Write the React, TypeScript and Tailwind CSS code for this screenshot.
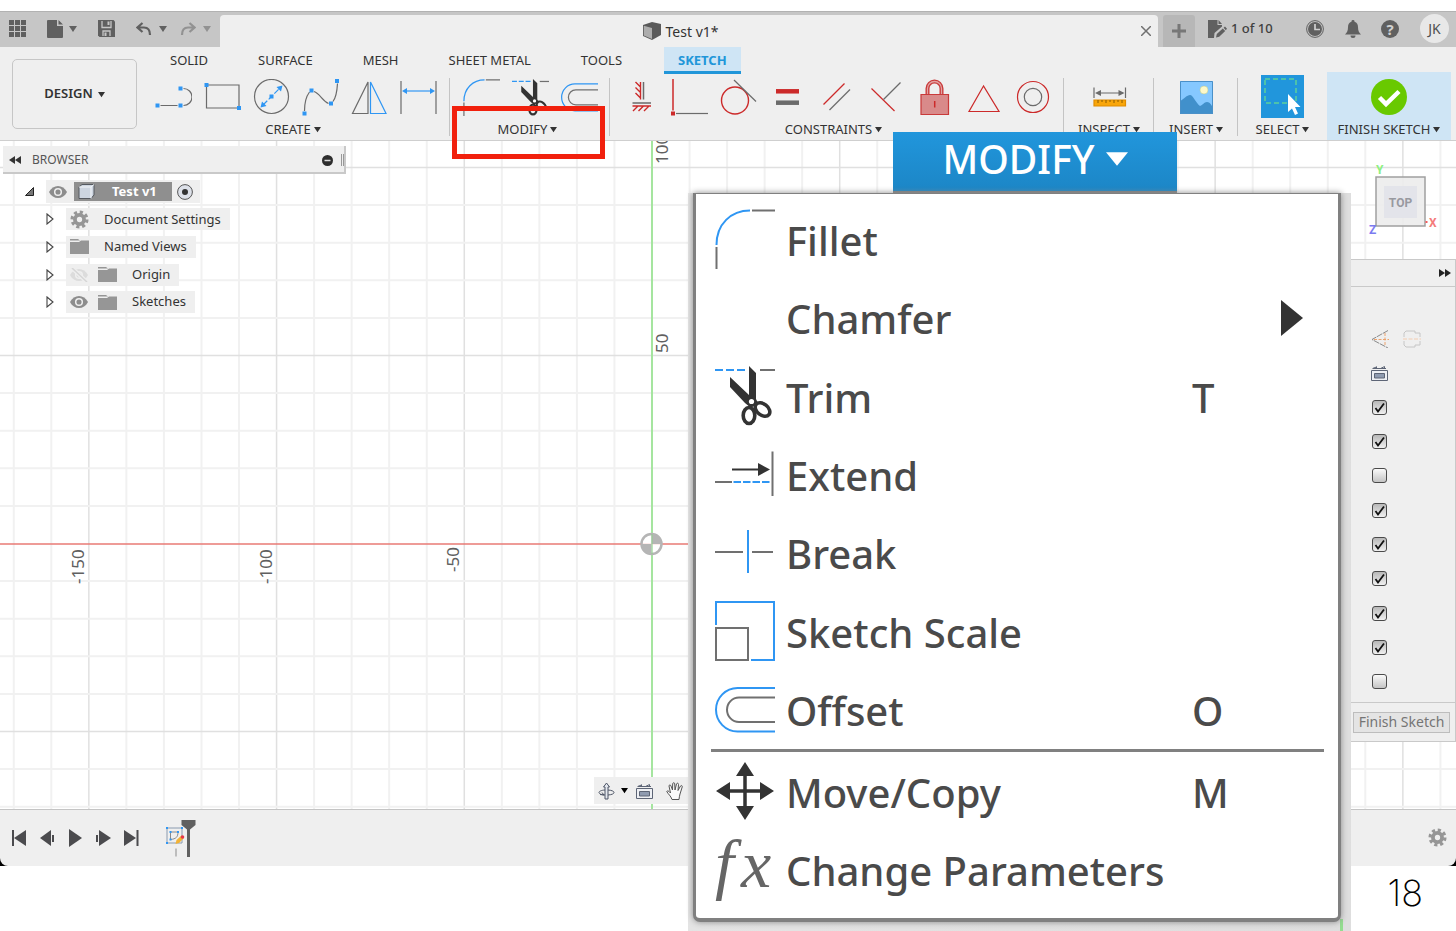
import React from "react";
import type { ReactNode } from "react";

const BLUE = "#2f96f3";
const GRAY = "#6b6b6b";
const RED = "#cc2a2a";

function Caret({ className = "size-[8px]" }: { className?: string }) {
  return (
    <svg viewBox="0 0 8 8" preserveAspectRatio="none" className={className} fill="currentColor" aria-hidden="true">
      <path d="M0 1h8L4 7z" />
    </svg>
  );
}

function Dot({ x, y, c = BLUE }: { x: number; y: number; c?: string }) {
  return <rect x={x - 2} y={y - 2} width="4" height="4" fill={c} stroke="none" />;
}

function Icon37({ children }: { children: ReactNode }) {
  return (
    <svg viewBox="0 0 37 37" className="size-[37px]" fill="none" stroke={GRAY} strokeWidth="1.2" aria-hidden="true">
      {children}
    </svg>
  );
}

function Art({ className, children }: { className: string; children: ReactNode }) {
  return (
    <svg viewBox="0 0 60 60" className={className} fill="none" stroke="#707070" strokeWidth="2" aria-hidden="true">
      {children}
    </svg>
  );
}

const Fillet = ({ className }: { className: string }) => (
  <Art className={className}>
    <path d="M1.500 36C1.500 15 16 1.500 35 1.500" stroke={BLUE} />
    <path d="M37 1.500h23M1.500 38v22" />
  </Art>
);

const Trim = ({ className }: { className: string }) => (
  <Art className={className}>
    <path d="M0 4h8M11 4h8M22 4h8" stroke={BLUE} />
    <path d="M45 4h15" />
    <path d="M34 0l7 7v26l2 4-7 5-6-5-15-16v-10l19 18z" fill="#333" stroke="none" />
    <ellipse cx="34" cy="49.500" rx="5.800" ry="8" stroke="#333" strokeWidth="3.600" />
    <ellipse cx="47.500" cy="43.500" rx="8.200" ry="5.600" transform="rotate(38 47.500 43.500)" stroke="#333" strokeWidth="3.600" />
    <circle cx="36.500" cy="35.500" r="2.600" fill="#fff" stroke="none" />
  </Art>
);

const Extend = ({ className }: { className: string }) => (
  <Art className={className}>
    <path d="M57.500 7.500V52M0 38h17" />
    <path d="M18.500 38H55" stroke={BLUE} strokeDasharray="7.500 2" />
    <path d="M17 25.500h28" stroke="#333" />
    <path d="M43 19l12 6.500L43 32z" fill="#333" stroke="none" />
  </Art>
);

const Break = ({ className }: { className: string }) => (
  <Art className={className}>
    <path d="M33 7v43" stroke={BLUE} />
    <path d="M0 29h28M37 29h21" />
  </Art>
);

const SketchScale = ({ className }: { className: string }) => (
  <Art className={className}>
    <path d="M1 24V1h58v58H36" stroke={BLUE} />
    <path d="M1 27h32v32H1z" />
  </Art>
);

const Offset = ({ className }: { className: string }) => (
  <Art className={className}>
    <path d="M60 8H22.500a21.500 21.750 0 0 0 0 43.500H60" stroke={BLUE} />
    <path d="M60 17.500H24a12 12.250 0 0 0 0 24.500h36" />
  </Art>
);

const Move = ({ className }: { className: string }) => (
  <Art className={className}>
    <path d="M30 10v40M10 30h40" stroke="#333" strokeWidth="3.500" />
    <path d="M30 1l9 14H21zM30 59l9-14H21zM1 30l14-9v18zM59 30l-14-9v18z" fill="#333" stroke="none" />
  </Art>
);

const createTools: [string, ReactNode][] = [
  ["Line", <>
    <path d="M5.500 26.500h17M28.500 9.500a8.500 8.500 0 0 1 0 17" />
    <Dot x={2.5} y={26.5} /><Dot x={25.5} y={26.5} /><Dot x={25.5} y={9.5} />
  </>],
  ["Rectangle", <>
    <path d="M2.500 6H35v23H2.500z" /><Dot x={2.5} y={6} /><Dot x={35} y={29} />
  </>],
  ["Circle", <>
    <circle cx="18.500" cy="17.500" r="17" />
    <path d="M10 26l17-17" stroke={BLUE} strokeDasharray="6 2" />
    <path d="M7.500 28.500l1.500-6 4.500 4.500zM29.500 6.500l-6 1.500 4.500 4.500z" fill={BLUE} stroke="none" />
    <Dot x={18.5} y={17.5} />
  </>],
  ["Spline", <>
    <path d="M2.500 32c0-9 2-15 5-19M12 12.500c6 2 8 9 14.500 12M31 22.500c3-4 4-9 4.500-18" />
    <Dot x={2.5} y={34.5} /><Dot x={9.5} y={11.5} /><Dot x={29} y={24.5} /><Dot x={35} y={2} />
  </>],
  ["Mirror", <>
    <path d="M17 3v31.500H1.500z" /><path d="M19.500 3v31.500H35z" stroke={BLUE} />
  </>],
  ["Dimension", <>
    <path d="M1 2v33M36 2v33" /><path d="M4 12h29" stroke={BLUE} />
    <path d="M2 12l5-3v6zM35 12l-5-3v6z" fill={BLUE} stroke="none" />
  </>],
];

const constraintTools: [string, ReactNode][] = [
  ["Horizontal/Vertical", <>
    <path d="M21.500 3v17.500M10.500 24H29" strokeWidth="1.500" />
    <path d="M18.500 3v17.500M18.500 8l-5-5M18.500 13.500l-5-5M18.500 19l-5-5M10.500 27H29M16 27l-5 5M21.500 27l-5 5M27 27l-5 5" stroke={RED} strokeWidth="1.400" />
  </>],
  ["Coincident", <>
    <path d="M2 0v31.500" stroke={RED} strokeWidth="1.500" /><path d="M5 34.500h32" /><Dot x={2} y={34.5} c={RED} />
  </>],
  ["Tangent", <>
    <circle cx="15" cy="21.500" r="13.500" stroke={RED} strokeWidth="1.400" /><path d="M14 1l22 21.500" />
  </>],
  ["Equal", <>
    <path d="M7 12.300h23" stroke={RED} strokeWidth="4.500" /><path d="M7 23.700h23" strokeWidth="4.500" />
  </>],
  ["Parallel", <>
    <path d="M5.500 25.500l21-21" stroke={RED} /><path d="M11.500 31L32 10.500" />
  </>],
  ["Perpendicular", <>
    <path d="M4.500 9.500L27.500 32" stroke={RED} /><path d="M16.500 20.500l17-17" />
  </>],
  ["Fix", <>
    <path d="M11.500 15V9.500a7 7 0 0 1 14 0V15" stroke="#c93a3a" strokeWidth="4" />
    <path d="M11.500 15V9.500a7 7 0 0 1 14 0V15" stroke="#e3a3a3" strokeWidth="1.300" />
    <path d="M5 15.500h27.500v20H5z" fill="#d98a8a" stroke="#c93a3a" />
    <path d="M18.700 22v6.500" stroke={RED} strokeWidth="1.500" />
  </>],
  ["Midpoint", <path d="M18.500 7L4 32.500h30z" stroke={RED} />],
  ["Concentric", <>
    <circle cx="19" cy="18" r="15.500" stroke={RED} /><circle cx="19" cy="18" r="8.700" />
  </>],
];

function Tool({ label, children }: { label: string; children: ReactNode }) {
  return (
    <button type="button" aria-label={label} className="flex h-full w-[49px] items-center justify-center">
      {children}
    </button>
  );
}

function Group({ label, className = "", wide = false, last = false, children }: { label: string; className?: string; wide?: boolean; last?: boolean; children: ReactNode }) {
  return (
    <section className={`relative flex flex-col ${className}`}>
      <div className="flex h-[50px] justify-center">{children}</div>
      <button type="button" className={`flex h-[14px] items-center justify-center gap-[3px] text-[13px] leading-[14px] whitespace-nowrap text-[#333] ${wide ? "pr-[6px]" : ""}`}>
        {label}
        <Caret className="size-[7px]" />
      </button>
      {!last && <div className="absolute top-[6px] right-0 h-[58px] w-px bg-[#c4c4c4]" />}
    </section>
  );
}

function TopBar() {
  return (
    <header className="flex h-[36px] items-end border-t border-[#b2b2b2] bg-[#c6c6c6] text-[#606060]">
      <div className="flex h-full w-[220px] shrink-0 items-center pb-[2px] pl-[9px]">
        <button type="button" aria-label="Data panel">
          <svg viewBox="0 0 17 17" className="size-[17px]" fill="currentColor">
            <path d="M0 0h5v5H0zM6 0h5v5H6zM12 0h5v5h-5zM0 6h5v5H0zM6 6h5v5H6zM12 6h5v5h-5zM0 12h5v5H0zM6 12h5v5H6zM12 12h5v5h-5z" />
          </svg>
        </button>
        <button type="button" aria-label="File" className="ml-[21px] flex items-center gap-[6px]">
          <svg viewBox="0 0 16 18" className="h-[18px] w-[16px]" fill="currentColor">
            <path d="M1 0h9v6h6v11a1 1 0 0 1-1 1H1a1 1 0 0 1-1-1V1a1 1 0 0 1 1-1zM11.500 0L16 4.500h-4.500z" />
          </svg>
          <Caret />
        </button>
        <button type="button" aria-label="Save" className="ml-[21px]">
          <svg viewBox="0 0 17 17" className="size-[17px]">
            <path d="M0 0h15.500L17 1.500V17H1.500L0 15.500z" fill="currentColor" />
            <path d="M4 1v6.500h9V1M5 16v-5h7v5" fill="none" stroke="#c6c6c6" strokeWidth="1.300" />
            <path d="M9.500 1.500h2v3.500h-2zM6.500 12.500h2V16h-2z" fill="#c6c6c6" />
          </svg>
        </button>
        <button type="button" aria-label="Undo" className="ml-[21px] flex items-center gap-[7px]">
          <svg viewBox="0 0 16 14" className="h-[14px] w-[16px]" fill="none" stroke="currentColor" strokeWidth="2.200">
            <path d="M6.500 1L1.500 5.500l5 4.500M2 5.500h6c4 0 6 3 6 7.500" />
          </svg>
          <Caret />
        </button>
        <button type="button" aria-label="Redo" className="ml-[13px] flex items-center gap-[7px] text-[#929292]">
          <svg viewBox="0 0 16 14" className="h-[14px] w-[16px]" fill="none" stroke="currentColor" strokeWidth="2.200">
            <path d="M9.500 1l5 4.500-5 4.500M14 5.500H8c-4 0-6 3-6 7.500" />
          </svg>
          <Caret />
        </button>
      </div>
      <div className="flex h-[32px] flex-1 items-center rounded-t-[4px] bg-[#efefef] pr-[7px]">
        <div className="flex flex-1 items-center justify-center gap-[5px] text-[14px] text-[#333]">
          <svg viewBox="0 0 18 18" className="size-[18px]" aria-hidden="true">
            <path d="M0 3l9-3 9 2v11l-9 5-9-4z" fill="#5a5a5a" />
            <path d="M.8 3.800L9 6v11l-8.200-3.500z" fill="#adadad" />
          </svg>
          Test v1*
        </div>
        <button type="button" aria-label="Close tab">
          <svg viewBox="0 0 10 10" className="size-[10px]" stroke="#707070" strokeWidth="1.500">
            <path d="M0 0l10 10M10 0L0 10" />
          </svg>
        </button>
      </div>
      <button type="button" aria-label="New tab" className="ml-[5px] flex h-[32px] w-[32px] items-center justify-center rounded-t-[3px] bg-[#b7b7b7] text-[#777]">
        <svg viewBox="0 0 14 14" className="size-[14px]" fill="currentColor"><path d="M5.500 0h3v5.500H14v3H8.500V14h-3V8.500H0v-3h5.500z" /></svg>
      </button>
      <div className="flex h-full w-[261px] shrink-0 items-center pb-[2px] pl-[13px]">
        <button type="button" className="flex items-center gap-[4px] text-[13px] font-medium whitespace-nowrap text-[#404040]">
          <svg viewBox="0 0 19 18" className="h-[18px] w-[19px]" fill="#606060">
            <path d="M0 0h9.500v5H14v1.500L6.500 13 6 18H0zM10.500 0L14 4h-3.500zM8 17.500l.8-3.500 6-5.500 2.400 2.600-6 5.600zM15.600 7.800L17 6.500l2 2.200-1.200 1.500z" />
          </svg>
          1 of 10
        </button>
        <div className="ml-auto flex items-center pr-[7px]">
          <button type="button" aria-label="Job status">
            <svg viewBox="0 0 18 18" className="size-[18px]">
              <circle cx="9" cy="9" r="8.400" fill="none" stroke="#606060" />
              <circle cx="9" cy="9" r="7" fill="#606060" />
              <path d="M9 4v5.500h5" fill="none" stroke="#d0d0d0" strokeWidth="1.700" />
            </svg>
          </button>
          <button type="button" aria-label="Notifications" className="ml-[21px]">
            <svg viewBox="0 0 16 18" className="h-[18px] w-[16px]" fill="#606060">
              <path d="M8 0a1.500 1.500 0 0 1 1.500 1.700C12 2.500 13 4.500 13 7c0 4 1 5.500 3 7.500H0C2 12.500 3 11 3 7c0-2.500 1-4.500 3.500-5.300A1.500 1.500 0 0 1 8 0zM5.500 15.500h5a2.500 2.500 0 0 1-5 0z" />
            </svg>
          </button>
          <button type="button" aria-label="Help" className="ml-[20px] flex size-[18px] items-center justify-center rounded-full bg-[#606060] text-[15px] leading-[18px] font-bold text-[#d0d0d0]">
            ?
          </button>
          <button type="button" className="ml-[21px] flex size-[29px] items-center justify-center rounded-full bg-[#e8e8e8] text-[14px] text-[#505050]">
            JK
          </button>
        </div>
      </div>
    </header>
  );
}

function Ribbon() {
  return (
    <div className="flex border-b border-[#cfcfcf] bg-[#efefef]">
      <div className="pt-[12px] pr-[7px] pb-[11px] pl-[12px]">
        <button type="button" className="flex h-[70px] w-[125px] items-center justify-center gap-[5px] rounded-[5px] border border-[#c6c6c6] text-[13px] font-semibold text-[#333]">
          DESIGN
          <Caret className="size-[7px]" />
        </button>
      </div>
      <div className="flex flex-1 flex-col">
        <nav className="flex h-[25px] items-start pl-px text-[13px] leading-[26px] whitespace-nowrap text-[#333]">
          <a href="#solid" className="px-[25px]">SOLID</a>
          <a href="#surface" className="px-[25px]">SURFACE</a>
          <a href="#mesh" className="px-[25px]">MESH</a>
          <a href="#sheet-metal" className="px-[25px]">SHEET METAL</a>
          <a href="#tools" className="px-[25px]">TOOLS</a>
          <a href="#sketch" className="ml-[17px] h-[27px] border-b-[3px] border-[#2196d9] bg-[#cfe5f5] px-[14px] font-bold text-[#2196d9]">SKETCH</a>
        </nav>
        <div className="flex h-[68px]">
          <Group label="CREATE" className="pr-[7px] pl-[5px]" wide>
            {createTools.map(([n, art]) => <Tool key={n} label={n}><Icon37>{art}</Icon37></Tool>)}
          </Group>
          <Group label="MODIFY" className="pr-[6px] pl-[7px]" wide>
            <Tool label="Fillet"><Fillet className="size-[37px]" /></Tool>
            <Tool label="Trim"><Trim className="size-[37px]" /></Tool>
            <Tool label="Offset"><Offset className="size-[37px]" /></Tool>
            <div className="absolute top-[34px] left-[2px] z-10 h-[53px] w-[153px] border-[5px] border-[#f1200d]" />
          </Group>
          <Group label="CONSTRAINTS" className="pr-[7px] pl-[6px]" wide>
            {constraintTools.map(([n, art]) => <Tool key={n} label={n}><Icon37>{art}</Icon37></Tool>)}
          </Group>
          <Group label="INSPECT" className="w-[90px]">
            <Tool label="Measure">
              <Icon37>
                <path d="M3 8.500V19M34.500 8.500V19M6 14h26" />
                <path d="M4 14l6-3v6zM33.500 14l-6-3v6z" fill={GRAY} stroke="none" />
                <path d="M3 21h31.500v6H3z" fill="#f9a60a" stroke="#e08c00" />
                <path d="M7 21v3M11 21v2M15 21v3M19 21v2M23 21v3M27 21v2M31 21v3" stroke="#8a5a00" strokeWidth="1" />
              </Icon37>
            </Tool>
          </Group>
          <Group label="INSERT" className="w-[84px]">
            <Tool label="Insert image">
              <svg viewBox="0 0 33 33" className="size-[33px]">
                <path d="M0 0h33v33H0z" fill="#85c8ff" />
                <circle cx="24" cy="9" r="4" fill="#fcf8c9" stroke="#b9c98d" strokeWidth=".5" />
                <path d="M0 20c4-2 7-6 10-6s6 8 10 11c3-1 4-4 7-4s4 3 6 5v7H0z" fill="#4190cb" />
                <path d="M.5.5h32v32H.5z" fill="none" stroke="#4a90c8" />
              </svg>
            </Tool>
          </Group>
          <Group label="SELECT" className="w-[89px]" last>
            <button type="button" aria-label="Select" className="mt-[3px] size-[43px]">
              <svg viewBox="0 0 43 43" className="size-[43px]">
                <path d="M0 0h43v43H0z" fill="#2196dc" />
                <path d="M4 4h31v24H4z" fill="none" stroke="#5cd19a" strokeWidth="1.500" strokeDasharray="5 3" />
                <path d="M27 19v18l4-3.500 3 6.500 3-1.500-3-6.500h5.500z" fill="#fff" />
              </svg>
            </button>
          </Group>
          <Group label="FINISH SKETCH" className="w-[124px] bg-[#cfe5f5]" last>
            <Tool label="Finish Sketch">
              <svg viewBox="0 0 36 36" className="size-[36px]">
                <circle cx="18" cy="18" r="18" fill="#69c900" />
                <path d="M8.500 18.500l6.500 6.500 13-12.500" fill="none" stroke="#fff" strokeWidth="4.500" />
              </svg>
            </Tool>
          </Group>
        </div>
      </div>
    </div>
  );
}

function Grid() {
  const step = 37.6;
  const lines: ReactNode[] = [];
  for (let i = -18; i <= 45; i++) {
    const x = 652 + i * step * 0.9985;
    if (i !== 0) lines.push(<path key={`v${i}`} d={`M${x} 0V2000`} stroke={i % 5 === 0 ? "#e0e0e0" : "#f1f1f1"} strokeWidth={i % 5 === 0 ? 1.5 : 2} />);
  }
  for (let j = -11; j <= 30; j++) {
    const y = 402.5 + j * step;
    if (j !== 0) lines.push(<path key={`h${j}`} d={`M0 ${y}H3000`} stroke={j % 5 === 0 ? "#e0e0e0" : "#f1f1f1"} strokeWidth={j % 5 === 0 ? 1.5 : 2} />);
  }
  const labels: [string, number, number][] = [["-150", 84, 443], ["-100", 272, 443], ["-50", 459, 431], ["50", 668, 212], ["100", 668, 23]];
  return (
    <svg className="absolute inset-0 h-full w-full" aria-hidden="true">
      {lines}
      <path d="M652 0V2000" stroke="#a5e59f" strokeWidth="2" />
      <path d="M0 403H3000" stroke="#e87a74" strokeWidth="1.600" />
      <circle cx="651.500" cy="403" r="10" fill="#fff" fillOpacity=".8" stroke="#b5b5b5" strokeWidth="2.500" />
      <path d="M651.500 403v-10a10 10 0 0 0-10 10zM651.500 403v10a10 10 0 0 0 10-10z" fill="#b5b5b5" transform="rotate(90 651.500 403)" />
      <path d="M652 393v20" stroke="#8fcf8c" strokeWidth="1" />
      {labels.map(([t, x, y]) => (
        <text key={t} transform={`translate(${x} ${y}) rotate(-90)`} fontSize="17" fill="#606060">{t}</text>
      ))}
    </svg>
  );
}

const Eye = ({ c = "#8d8d8d" }: { c?: string }) => (
  <svg viewBox="0 0 18 12" className="h-[12px] w-[18px]" aria-hidden="true">
    <path d="M0 6C4-2 14-2 18 6 14 14 4 14 0 6z" fill={c} />
    <circle cx="9" cy="6" r="3.300" fill={c} stroke="#efefef" strokeWidth="1.500" />
  </svg>
);

const EyeOff = () => (
  <svg viewBox="0 0 18 14" className="h-[14px] w-[18px]" aria-hidden="true">
    <path d="M0 7c4-8 14-8 18 0-4 8-14 8-18 0z" fill="#dcdcdc" />
    <circle cx="9" cy="7" r="3.300" fill="#dcdcdc" stroke="#efefef" strokeWidth="1.500" />
    <path d="M2 0l15 14" stroke="#efefef" strokeWidth="4" />
    <path d="M2 0l15 14" stroke="#d6d6d6" strokeWidth="1.500" />
  </svg>
);

const Folder = () => (
  <svg viewBox="0 0 19 15" className="h-[15px] w-[19px]" fill="#969696" aria-hidden="true">
    <path d="M0 0h8l2 1.500H0zM0 3h9l2-1.500h8V15H0z" />
  </svg>
);

const Gear = () => (
  <svg viewBox="-10 -10 20 20" className="size-[19px]" aria-hidden="true">
    <circle r="4.800" fill="none" stroke="#969696" strokeWidth="4" />
    <circle r="7.800" fill="none" stroke="#969696" strokeWidth="3.400" strokeDasharray="3.300 2.826" />
  </svg>
);

const Expand = () => (
  <svg viewBox="0 0 8 12" className="h-[12px] w-[8px]" fill="#fff" stroke="#444" strokeWidth="1.100" aria-hidden="true">
    <path d="M1 1l6 5-6 5z" />
  </svg>
);

function TreeRow({ icons, label }: { icons: ReactNode; label: string }) {
  return (
    <li className="flex items-center gap-[12px] pl-[46px]">
      <button type="button" aria-label={`Expand ${label}`}><Expand /></button>
      <div className="flex h-[22px] items-center gap-[10px] bg-[#efefef] pr-[9px] pl-[4px]">
        {icons}
        <span className="pl-[5px]">{label}</span>
      </div>
    </li>
  );
}

function Browser() {
  return (
    <aside className="relative w-[346px] pt-[5px] text-[#333]">
      <div className="ml-[3px] flex h-[28px] items-center border-r-2 border-b-2 border-[#c9c9c9] bg-[#efefef] pt-[2px] pl-[6px] text-[12px]">
        <button type="button" aria-label="Collapse">
          <svg viewBox="0 0 12 8" className="h-[8px] w-[12px]" fill="#333"><path d="M6 0v8L0 4zM12 0v8L6 4z" /></svg>
        </button>
        <h2 className="ml-[11px] text-[#555]">BROWSER</h2>
        <button type="button" aria-label="Minimize" className="ml-auto">
          <svg viewBox="0 0 11 11" className="size-[11px]"><circle cx="5.500" cy="5.500" r="5.500" fill="#2d2d2d" /><path d="M2.500 5.500h6" stroke="#ddd" strokeWidth="1.500" /></svg>
        </button>
        <div className="ml-[8px] h-[12px] w-[3px] border-x border-[#999]" />
      </div>
      <ul className="mt-[4px] grid h-[138px] grid-rows-5 text-[13px] whitespace-nowrap">
        <li className="flex items-center gap-[12px] pl-[25px]">
          <button type="button" aria-label="Collapse Test v1">
            <svg viewBox="0 0 9 9" className="size-[9px]"><path d="M8.500.5v8h-8z" fill="#777" stroke="#222" /></svg>
          </button>
          <div className="flex h-[23px] items-center bg-[#efefef] pr-[7px] pl-[3px]">
            <Eye />
            <div className="ml-[7px] flex h-[19px] w-[98px] items-center bg-[#8f8f8f] pl-[4px] font-bold text-white">
              <svg viewBox="0 0 17 15" className="h-[15px] w-[17px]" aria-hidden="true">
                <path d="M1 3l3-2.500h12V11l-3 3.500H1z" fill="#cdd5e0" stroke="#55595f" />
                <path d="M1 3h12v11.500M13 3l3-2.500" fill="none" stroke="#f4f6f9" />
              </svg>
              <span className="ml-[17px]">Test v1</span>
            </div>
            <label className="ml-[5px] flex">
              <input type="radio" defaultChecked aria-label="Activate Test v1" className="peer sr-only" />
              <svg viewBox="0 0 16 16" className="size-[16px]"><circle cx="8" cy="8" r="7.400" fill="#dde1e9" stroke="#555" /><circle cx="8" cy="8" r="3" fill="#333" /></svg>
            </label>
          </div>
        </li>
        <TreeRow label="Document Settings" icons={<Gear />} />
        <TreeRow label="Named Views" icons={<Folder />} />
        <TreeRow label="Origin" icons={<><EyeOff /><Folder /></>} />
        <TreeRow label="Sketches" icons={<><Eye /><Folder /></>} />
      </ul>
    </aside>
  );
}

const LookAt = () => (
  <svg viewBox="0 0 17 16" className="h-[16px] w-[17px]" fill="none" stroke="#5d6576" aria-hidden="true">
    <path d="M.5 5.500h16v10H.5z" fill="#eef0f4" /><path d="M3.500 8.500h10v4.500h-10z" fill="#8f9bb0" />
    <path d="M1.500 3.500l4-1.500M2 3.500h13M5.500 1.500v2M9.500 3.500l4-2v2" />
  </svg>
);

function NavBar() {
  return (
    <div className="absolute bottom-[5px] left-[594px] flex h-[27px] items-center bg-[#efefef] pr-[24px] pl-[4px]">
      <button type="button" aria-label="Orbit" className="flex items-center gap-[6px]">
        <svg viewBox="0 0 17 18" className="h-[18px] w-[17px]" fill="none" stroke="#4d5566" aria-hidden="true">
          <path d="M7 17V5H5.500l3-4 3 4H10v12z" fill="#e4e8ef" />
          <path d="M7 8C-1 8.500-1 12.500 7 13M10 13c8-.5 8-4.500 0-5M2 12.500l4 .5-2-2.500" />
        </svg>
        <Caret className="size-[7px]" />
      </button>
      <button type="button" aria-label="Look at" className="ml-[8px]"><LookAt /></button>
      <button type="button" aria-label="Pan" className="ml-[13px]">
        <svg viewBox="0 0 18 18" className="size-[18px]" fill="#fafafa" stroke="#555" aria-hidden="true">
          <path d="M6 17.500C5 14 2 12 .8 9.500c.5-1.200 1.700-.8 3.700 1.500L3 4c.2-1.500 1.500-1.500 2 0l1.500 4L6.700 1.800c.3-1.500 1.800-1.500 2 0L9 8l1.500-6c.5-1.300 2-1 2 .5L12 8.500 14.500 4c1-1 2-.3 1.700 1L14 12c-.3 2-1 3.500-1 5.500z" />
        </svg>
      </button>
    </div>
  );
}

function ViewCube() {
  return (
    <svg viewBox="0 0 76 80" className="absolute top-[20px] right-[16px] h-[80px] w-[76px]" fontWeight="bold" aria-label="View cube, top">
      <path d="M12 16h49v49H12z" fill="#ececec" fillOpacity=".9" stroke="#a0a0a0" strokeWidth="1.500" />
      <path d="M20 25h33v32H20z" fill="#e3e4ea" />
      <text x="36.500" y="46" textAnchor="middle" fontSize="12" fill="#98999f" fontFamily="Roboto, sans-serif">TOP</text>
      <text x="12" y="13" fontSize="12" fill="#8cf07f" fontFamily="Roboto, sans-serif">Y</text>
      <text x="65" y="66" fontSize="12" fill="#f47b7b" fontFamily="Roboto, sans-serif">X</text>
      <path d="M61.500 61h2" stroke="#f45b5b" strokeWidth="2" />
      <text x="5" y="73" fontSize="12" fill="#7b7bf0" fontFamily="Roboto, sans-serif">Z</text>
    </svg>
  );
}

const paletteOptions: [string, boolean][] = [
  ["Sketch Grid", true], ["Snap", true], ["Slice", false], ["Profile", true], ["Points", true],
  ["Dimensions", true], ["Constraints", true], ["Projected Geometries", true], ["3D Sketch", false],
];

function Palette() {
  return (
    <aside className="absolute top-[118px] right-0 w-[106px] border border-[#c9c9c9] bg-[#efefef]">
      <div className="flex h-[27px] items-center justify-end border-b border-[#c9c9c9] pr-[4px]">
        <button type="button" aria-label="Collapse palette">
          <svg viewBox="0 0 12 8" className="h-[8px] w-[12px]" fill="#222"><path d="M0 0v8l6-4zM6 0v8l6-4z" /></svg>
        </button>
      </div>
      <div className="flex gap-[14px] pt-[43px] pl-[20px]">
        <button type="button" aria-label="Construction">
          <svg viewBox="0 0 18 18" className="size-[18px]" fill="none" stroke="#8a8a8a">
            <path d="M17 .5L1 9.500l16 8.500" strokeDasharray="6 .8" /><path d="M3 9.500h15M14 3v13" stroke="#eda36d" strokeDasharray="3 1.500" />
          </svg>
        </button>
        <button type="button" aria-label="Centerline">
          <svg viewBox="0 0 18 18" className="size-[18px]" fill="none" stroke="#c6c6c6">
            <path d="M1 7V3l2-2h9v2h5v4M1 11v4l2 2h9v-2h5v-4" /><path d="M0 9h18" stroke="#f3cdb2" strokeDasharray="4 1.500" />
          </svg>
        </button>
      </div>
      <button type="button" aria-label="Look at sketch" className="mt-[17px] ml-[20px] block"><LookAt /></button>
      <ul className="mt-[9px] grid h-[309px] grid-rows-9 pl-[21px]">
        {paletteOptions.map(([name, on]) => (
          <li key={name} className="flex items-center">
            <input type="checkbox" defaultChecked={on} aria-label={name} className="peer size-[15px] appearance-none rounded-[3px] border border-[#4a4a4a] bg-linear-to-b from-[#b8b8b8] to-[#f0f0f0] not-checked:from-[#fafafa] not-checked:to-[#c4c4c4]" />
            <svg viewBox="0 0 15 15" className="pointer-events-none -ml-[15px] hidden size-[15px] peer-checked:block" fill="none" stroke="#111" strokeWidth="1.800" aria-hidden="true">
              <path d="M3.500 8l2.500 3.500L12 3.500" />
            </svg>
          </li>
        ))}
      </ul>
      <div className="mt-[3px] flex h-[39px] items-center justify-end border-t border-[#c9c9c9] pr-[5px]">
        <button type="button" className="h-[21px] w-[97px] border border-[#bdbdbd] bg-[#e4e4e4] text-[14px] leading-[18px] whitespace-nowrap text-[#757575]">
          Finish Sketch
        </button>
      </div>
    </aside>
  );
}

const playback: [string, string][] = [
  ["Go to start", "M1 1h2v16H1zM15 1v16L3 9z"],
  ["Step back", "M12 1v16L1 9zM13 6h2v7h-2z"],
  ["Play", "M2 0l13 9-13 9z"],
  ["Step forward", "M4 1l12 8-12 8zM1 6h2v7H1z"],
  ["Go to end", "M1 1l12 8-12 8zM13.500 1h2v16h-2z"],
];

function Timeline() {
  return (
    <footer className="bg-black">
      <div className="flex h-[57px] items-center rounded-b-[8px] border-t border-[#c4c4c4] bg-[#efefef] pr-[9px] pb-px pl-[5px]">
        {playback.map(([label, d]) => (
          <button key={label} type="button" aria-label={label} className="flex w-[28px] justify-center">
            <svg viewBox="0 0 17 18" className="h-[18px] w-[17px]" fill="#4b4b4e"><path d={d} /></svg>
          </button>
        ))}
        <button type="button" aria-label="Sketch feature" className="ml-[19px]">
          <svg viewBox="0 0 34 40" className="h-[40px] w-[34px]" fill="none">
            <path d="M3 10h15v15H3z" stroke="#8a9bb0" /><path d="M6.500 14H14c0 5-2 7-7.500 7.500z" stroke="#8a8a8a" />
            <g fill={BLUE}><path d="M2 9h2v2H2zM17 9h2v2h-2zM2 24h2v2H2zM5.500 13h2v2h-2zM13 13h2v2h-2zM5.500 20.500h2v2h-2z" /></g>
            <path d="M11.500 26l1-4 5-4.500 2.500 2.500-5 5z" fill="#f2b234" /><circle cx="18.500" cy="19" r="1.800" fill="#e8384b" />
            <path d="M12 30.500v8" stroke="#bdbdbd" strokeWidth="2" />
            <path d="M17.500 2h14v5l-5.500 4.500v27.500h-3V11.500l-5.500-4.500z" fill="#606060" />
          </svg>
        </button>
        <button type="button" aria-label="Timeline settings" className="ml-auto"><Gear /></button>
      </div>
    </footer>
  );
}

function MenuItem({ icon, label, hint }: { icon?: ReactNode; label: string; hint?: ReactNode }) {
  return (
    <li className="flex">
      <button type="button" role="menuitem" className="flex w-full items-center pl-[19px] text-left">
        <span className="flex w-[71px]">{icon}</span>
        <span className="flex-1 pt-[3px]">{label}</span>
        {hint}
      </button>
    </li>
  );
}

const Key = ({ children }: { children: string }) => <span className="w-[146px] pt-[3px]">{children}</span>;

function ModifyMenu() {
  return (
    <div className="absolute top-[132px] right-[105px] z-20 w-[663px]">
      <button type="button" className="ml-[205px] flex h-[61px] w-[284px] items-center justify-center gap-[11px] border-b-2 border-[#808080] bg-linear-to-b from-[#2196dc] to-[#1c86c6] pb-[6px] text-[39px] leading-[48px] font-medium text-white">
        MODIFY
        <Caret className="h-[18px] w-[22px]" />
      </button>
      <div className="relative bg-linear-to-r from-[#e4e4e4] to-[#dedede] pr-[10px] pb-[9px] pl-[5px]">
        <div className="absolute right-[8px] bottom-0 h-[12px] w-[3px] bg-[#93dd8f]" />
        <div role="menu" className="relative rounded-b-[7px] border-x-[3px] border-t border-b-[4px] border-[#808080] bg-white pt-[6px] pb-[9px] text-[40px] leading-[48px] font-medium whitespace-nowrap text-[#4a4a4a] shadow-[0_0_6px_#888]">
          <ul className="grid h-[549px] grid-rows-7">
            <MenuItem icon={<Fillet className="size-[60px]" />} label="Fillet" />
            <MenuItem label="Chamfer" hint={<span className="w-[57px]"><svg viewBox="0 0 22 36" className="h-[36px] w-[22px]" fill="#333"><path d="M0 0l22 18L0 36z" /></svg></span>} />
            <MenuItem icon={<Trim className="size-[60px]" />} label="Trim" hint={<Key>T</Key>} />
            <MenuItem icon={<Extend className="size-[60px]" />} label="Extend" />
            <MenuItem icon={<Break className="size-[60px]" />} label="Break" />
            <MenuItem icon={<SketchScale className="size-[60px]" />} label="Sketch Scale" />
            <MenuItem icon={<Offset className="size-[60px]" />} label="Offset" hint={<Key>O</Key>} />
          </ul>
          <hr className="mr-[14px] ml-[15px] border-t-[3px] border-[#808080]" />
          <ul className="grid h-[157px] grid-rows-2">
            <MenuItem icon={<Move className="size-[60px]" />} label="Move/Copy" hint={<Key>M</Key>} />
            <MenuItem
              icon={<span className="flex gap-[7px] pb-[12px] font-['Liberation_Serif',serif] text-[68px] font-normal text-[#666] italic"><span>f</span><span>x</span></span>}
              label="Change Parameters"
            />
          </ul>
        </div>
      </div>
    </div>
  );
}

export default function App() {
  return (
    <div className="relative flex min-h-screen flex-col overflow-hidden bg-white pt-[11px] font-['Noto_Sans',sans-serif]">
      <TopBar />
      <Ribbon />
      <main className="relative min-h-[600px] flex-1">
        <Grid />
        <Browser />
        <NavBar />
        <ViewCube />
        <Palette />
      </main>
      <Timeline />
      <div className="flex h-[65px] items-start justify-end pt-[5px] pr-[33px] font-['Inter',sans-serif] text-[36px] leading-[44px] font-extralight text-black">18</div>
      <ModifyMenu />
    </div>
  );
}
